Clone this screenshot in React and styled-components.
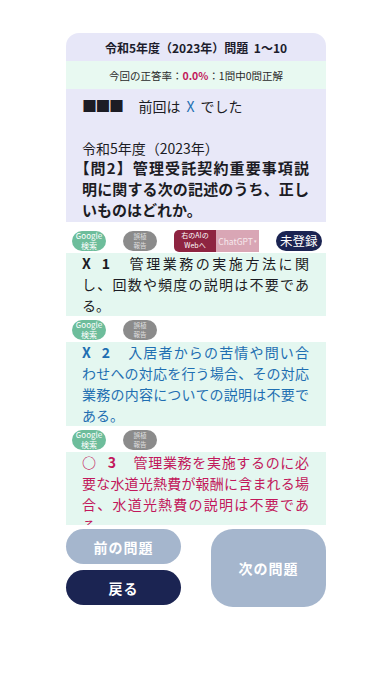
import React from 'react';
import styled, {createGlobalStyle} from 'styled-components';

const GlobalStyle = createGlobalStyle`
  html, body {
    margin: 0;
    padding: 0;
    background: #ffffff;
  }
  body {
    font-family: "Noto Sans CJK JP", "Noto Sans", sans-serif;
    color: #1c1c24;
  }
`;

const Page = styled.div`
  width: 260px;
  margin: 0 auto;
  padding-top: 33px;
`;

const Card = styled.div`
  height: 492px;
  overflow: hidden;
  border-radius: 13px 13px 0 0;
`;

const Title = styled.div`
  height: 28px;
  display: flex;
  align-items: center;
  justify-content: center;
  background: #e7e7f8;
  font-size: 12px;
  font-weight: 700;
  color: #1c1c2c;
`;

const RateRow = styled.div`
  height: 28px;
  display: flex;
  align-items: center;
  justify-content: center;
  background: #e8f9f1;
  font-size: 10.5px;
  color: #2a2a2a;

  b {
    color: #c2185b;
    font-weight: 700;
  }
`;

const Question = styled.div`
  background: #e8e8f8;
  padding: 7px 17px 1px 16px;
  font-size: 14px;
  line-height: 20.8px;
  text-spacing-trim: trim-start;
`;

const Line = styled.span`
  display: block;
  white-space: nowrap;
  text-align: justify;
  text-align-last: ${(p) => (p.$last ? 'left' : 'justify')};
  font-size: ${(p) => (p.$bold ? '15px' : 'inherit')};
  font-weight: ${(p) => (p.$bold ? 700 : 400)};
  margin-top: ${(p) => p.$gap || '0'};
`;

const BlueX = styled.span`
  color: #1f6fb2;
  margin: 0 6px;
`;

const Squares = styled.span`
  font-size: 15px;
  letter-spacing: -1.5px;
  margin-right: 16px;
`;

const ActionRow = styled.div`
  display: flex;
  align-items: center;
  gap: 17px;
  padding: ${(p) => (p.$first ? '8px 8px 1px 6px' : '4px 8px 2px 6px')};
`;

const Pill = styled.div`
  flex-shrink: 0;
  width: 34px;
  height: 20px;
  border-radius: 10px;
  background: ${(p) => p.$bg};
  color: ${(p) => p.$fg};
  font-size: ${(p) => p.$size};
  display: flex;
  flex-direction: column;
  align-items: center;
  justify-content: center;
  text-align: center;

  span {
    display: block;
    line-height: ${(p) => p.$lh};
  }
`;

const AiGroup = styled.div`
  display: flex;
  flex-shrink: 0;
  height: 22px;
`;

const AiLink = styled.div`
  width: 42px;
  background: #8e2441;
  color: #fff;
  font-size: 7px;
  border-radius: 5px 0 0 5px;
  display: flex;
  flex-direction: column;
  align-items: center;
  justify-content: center;

  span {
    display: block;
    line-height: 9.5px;
  }
`;

const AiSelect = styled.div`
  width: 43px;
  background: #d9a6b5;
  color: #f6e8ec;
  font-size: 8.5px;
  display: flex;
  align-items: center;
  justify-content: center;
  gap: 1px;

  i {
    font-style: normal;
    font-size: 5px;
  }
`;

const Status = styled.div`
  margin-left: auto;
  flex-shrink: 0;
  white-space: nowrap;
  height: 20px;
  padding: 0 4px;
  border-radius: 10px;
  background: #1b2452;
  color: #fff;
  font-size: 12.5px;
  display: flex;
  align-items: center;
`;

const ChoiceBox = styled.div`
  background: #e4f7f0;
  padding: 0 17px 0 16px;
  font-size: 14px;
  line-height: 21px;
  color: ${(p) => p.$color};
`;

const Mark = styled.span`
  font-weight: 700;
  margin-right: 11px;
`;

const Num = styled.span`
  font-weight: 700;
  margin-right: 17px;
`;

const Footer = styled.div`
  display: grid;
  grid-template-columns: 115px 115px;
  column-gap: 30px;
  margin-top: 4px;
`;

const LeftButtons = styled.div`
  display: flex;
  flex-direction: column;
  gap: 6px;
`;

const NavButton = styled.button`
  border: none;
  height: ${(p) => (p.$tall ? '78px' : '35px')};
  border-radius: ${(p) => (p.$tall ? '22px' : '18px')};
  background: ${(p) => (p.$dark ? '#1b2452' : '#a5b6cd')};
  color: #fff;
  font-family: inherit;
  font-size: 14px;
  font-weight: 700;
  letter-spacing: 1px;
  padding: 0;
`;

const choices = [
  {
    mark: 'X', num: '1', color: '#1c1c24',
    lines: ['管理業務の実施方法に関', 'し、回数や頻度の説明は不要であ', 'る。'],
  },
  {
    mark: 'X', num: '2', color: '#1f6fb2',
    lines: ['入居者からの苦情や問い合', 'わせへの対応を行う場合、その対応', '業務の内容についての説明は不要で', 'ある。'],
  },
  {
    mark: '○', num: '3', color: '#c2185b',
    lines: ['管理業務を実施するのに必', '要な水道光熱費が報酬に含まれる場', '合、水道光熱費の説明は不要であ', 'る。'],
  },
];

function Actions({first}) {
  return (
    <ActionRow $first={first}>
      <Pill $bg="#6dbd9b" $fg="#fff" $size="8px" $lh="9.5px">
        <span>Google</span>
        <span>検索</span>
      </Pill>
      <Pill $bg="#8b8b8b" $fg="#dedede" $size="6.5px" $lh="8.5px">
        <span>誤植</span>
        <span>報告</span>
      </Pill>
      {first && (
        <>
          <AiGroup>
            <AiLink>
              <span>右のAIの</span>
              <span>Webへ</span>
            </AiLink>
            <AiSelect>ChatGPT<i>▾</i></AiSelect>
          </AiGroup>
          <Status>未登録</Status>
        </>
      )}
    </ActionRow>
  );
}

export default function App() {
  return (
    <Page>
      <GlobalStyle />
      <Card>
        <Title>令和5年度（2023年）問題&nbsp; 1〜10</Title>
        <RateRow>
          <span>今回の正答率：<b>0.0%</b>：1問中0問正解</span>
        </RateRow>
        <Question>
          <Line $last>
            <Squares>■■■</Squares>前回は<BlueX>X</BlueX>でした
          </Line>
          <Line $last $gap="20.8px">令和5年度（2023年）</Line>
          <Line $bold>【問2】管理受託契約重要事項説</Line>
          <Line $bold>明に関する次の記述のうち、正し</Line>
          <Line $bold $last>いものはどれか。</Line>
        </Question>

        {choices.map((c, i) => (
          <React.Fragment key={c.num}>
            <Actions first={i === 0} />
            <ChoiceBox $color={c.color}>
              {c.lines.map((text, j) => (
                <Line key={j} $last={j === c.lines.length - 1}>
                  {j === 0 && (
                    <>
                      <Mark>{c.mark}</Mark>
                      <Num>{c.num}</Num>
                    </>
                  )}
                  {text}
                </Line>
              ))}
            </ChoiceBox>
          </React.Fragment>
        ))}
      </Card>

      <Footer>
        <LeftButtons>
          <NavButton>前の問題</NavButton>
          <NavButton $dark>戻る</NavButton>
        </LeftButtons>
        <NavButton $tall>次の問題</NavButton>
      </Footer>
    </Page>
  );
}
